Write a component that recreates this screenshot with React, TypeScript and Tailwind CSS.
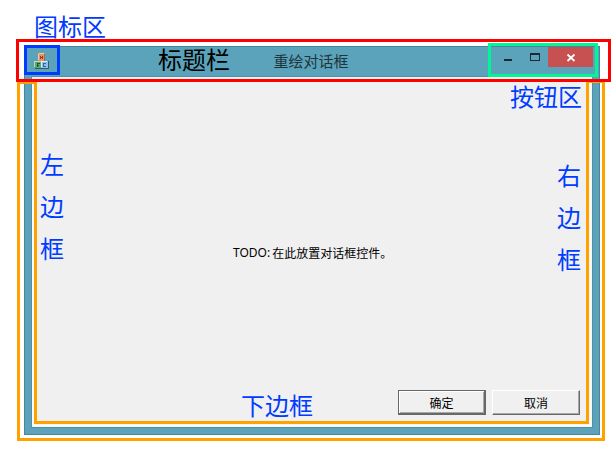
import type { ReactNode } from "react";

function AppIcon() {
  return (
    <svg width="16" height="16" viewBox="0 0 16 16" shapeRendering="crispEdges">
      <path d="M4 0h7v8H4z" fill="#e29562" />
      <path d="M5 0h5v1H5zM4 1h1v6H4z" fill="#f4cda8" />
      <path d="M10 1h1v7h-1z" fill="#a8654a" />
      <path d="M6 3h1v3H6zM8 3h1v3H8zM7 4h1v1H7z" fill="#a8331e" />
      <path d="M0 8h7v7H0z" fill="#5ba870" />
      <path d="M0 8h7v1H0zM0 9h1v5H0z" fill="#bcdcb8" />
      <path d="M3 10h3v1H4v1h1v1H4v1H3z" fill="#175c2c" />
      <path d="M7 8h7v7H7z" fill="#8fbfe8" />
      <path d="M7 8h6v1H7zM7 9h1v5H7z" fill="#e0eff8" />
      <path d="M9 10h3v1h-2v2h2v1H9z" fill="#2f66b4" />
      <path d="M14 8h1v7h-1zM1 15h14v1H1z" fill="#3d5966" />
    </svg>
  );
}

function WindowControls() {
  return (
    <div className="flex">
      <div className="h-5 w-[27px]">
        <svg width="27" height="20" shapeRendering="crispEdges">
          <path d="M7 12h8v2H7z" fill="#20292d" />
        </svg>
      </div>
      <div className="h-5 w-[24px]">
        <svg width="24" height="20" shapeRendering="crispEdges">
          <path fillRule="evenodd" d="M6 6h10v8H6zM7 8v5h8V8z" fill="#20292d" />
        </svg>
      </div>
      <div className="h-5 w-[45px] bg-[#c75050]">
        <svg width="45" height="20">
          <path d="M19.5 7.5l7 6.5M26.5 7.5l-7 6.5" stroke="#fff" strokeWidth="1.8" />
        </svg>
      </div>
    </div>
  );
}

function DialogButton({ children, primary = false }: { children: ReactNode; primary?: boolean }) {
  return (
    <button
      className={
        primary
          ? "h-[25px] w-[88px] border border-r-2 border-b-2 border-[#686868] bg-[#f0f0f0] pt-px text-xs leading-none shadow-[inset_1px_1px_0_#fff,inset_-1px_-1px_0_#a8a8a8]"
          : "h-[25px] w-[88px] border border-t-white border-l-white border-r-[#686868] border-b-[#686868] bg-[#f0f0f0] pt-px text-xs leading-none shadow-[inset_-1px_-1px_0_#a8a8a8]"
      }
    >
      {children}
    </button>
  );
}

function Dialog() {
  return (
    <div className="flex h-[389px] w-[576px] flex-col border border-[#46879c] bg-[#5ba3ba]">
      <header className="flex h-[30px] items-start justify-between">
        <div className="w-[90px] pt-[6px] pl-[9px]">
          <AppIcon />
        </div>
        <h1 className="pt-[4px] pl-[10px] text-[15px] leading-5 text-[#20343c]">重绘对话框</h1>
        <div className="pr-[6px]">
          <WindowControls />
        </div>
      </header>
      <main className="mx-[7px] mb-[7px] flex flex-1 flex-col bg-[#f0f0f0] shadow-[0_0_0_1px_#4d92a8]">
        <p className="flex items-center pt-[167px] pl-[201px] text-xs leading-[18px] text-black">
          <span className="mr-[2px] font-['Noto_Sans','Open_Sans',sans-serif] text-[12px]">TODO:</span>
          <span>在此放置对话框控件。</span>
        </p>
        <div className="mt-auto mr-[12px] mb-[12px] flex justify-end gap-[6px]">
          <DialogButton primary>确定</DialogButton>
          <DialogButton>取消</DialogButton>
        </div>
      </main>
    </div>
  );
}

function Annotations() {
  return (
    <>
      <svg className="absolute top-0 left-0" width="614" height="458" fill="none" strokeWidth="3">
        <path d="M33 84V425.5H590.5V83" stroke="#fafcfd" strokeWidth="2" />
        <path d="M18.5 82.5H35.5V422.5H587.5V81.5H603.5V439.5H18.5Z" stroke="#ffa200" />
        <rect x="17.5" y="40.5" width="592" height="40" stroke="#ff0000" />
        <rect x="25.5" y="46.5" width="33" height="27" stroke="#003cff" />
        <rect x="489.5" y="44.5" width="107" height="31" stroke="#00f696" />
      </svg>
      <div className="absolute top-[11px] left-[34px] text-2xl leading-[30px] text-[#003cff]">图标区</div>
      <div className="absolute top-[44px] left-[158px] text-2xl leading-[30px] text-black">标题栏</div>
      <div className="absolute top-[81px] left-[510px] text-2xl leading-[30px] text-[#003cff]">按钮区</div>
      <div className="absolute top-[390px] left-[241px] text-2xl leading-[30px] text-[#003cff]">下边框</div>
      <div className="absolute top-[143px] left-[40px] w-6 text-2xl leading-[42px] text-[#003cff]">左边框</div>
      <div className="absolute top-[154px] left-[557px] w-6 text-2xl leading-[42px] text-[#003cff]">右边框</div>
    </>
  );
}

export default function App() {
  return (
    <div className="relative h-[458px] w-[614px] overflow-hidden bg-white pt-[46px] pl-[24px] font-['Noto_Sans_CJK_SC',sans-serif]">
      <Dialog />
      <Annotations />
    </div>
  );
}
